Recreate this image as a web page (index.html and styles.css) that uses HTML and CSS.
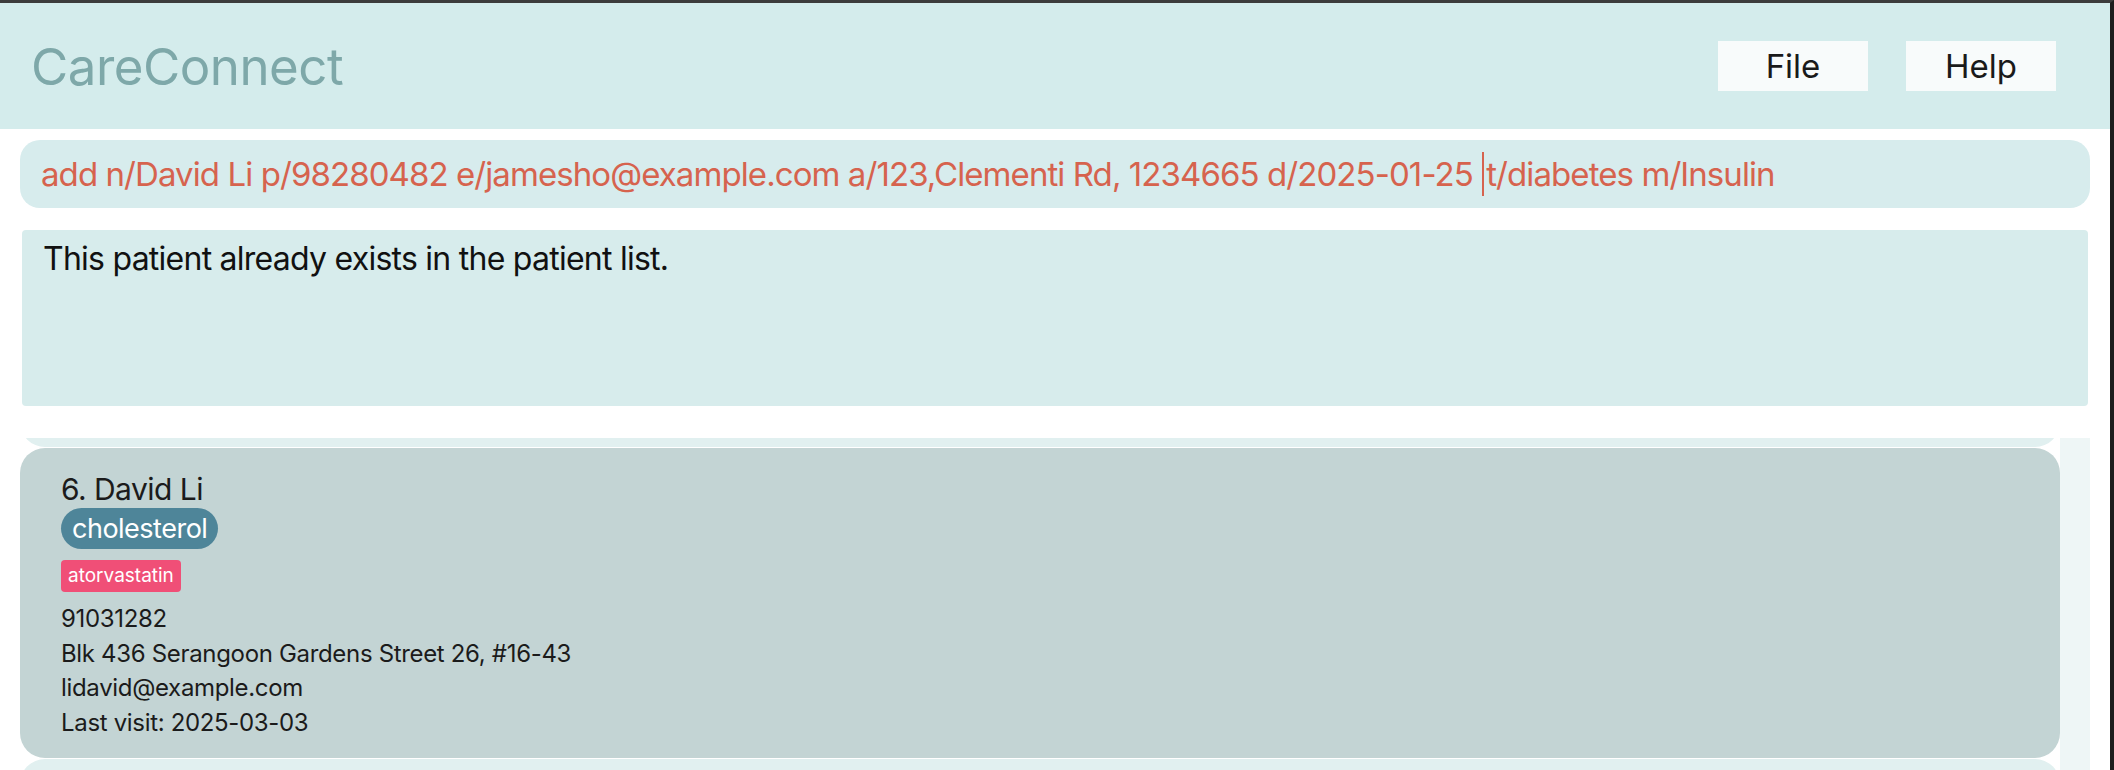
FILE: index.html
```html
<!DOCTYPE html>
<html lang="en">
<head>
<meta charset="utf-8">
<title>CareConnect</title>
<link rel="stylesheet" href="styles.css">
</head>
<body>
<div class="window">
  <header class="menubar">
    <div class="app-title">CareConnect</div>
    <nav class="menu">
      <button class="menu-btn">File</button>
      <button class="menu-btn">Help</button>
    </nav>
  </header>
  <main class="content">
    <div class="command-box">
      <span class="cmd-text">add n/David Li p/98280482 e/jamesho@example.com a/123,Clementi Rd, 1234665 d/2025-01-25&nbsp;</span><span class="caret"></span><span class="cmd-text">t/diabetes m/Insulin</span>
    </div>
    <div class="result-box">This patient already exists in the patient list.</div>
    <section class="list">
      <div class="list-scroll">
        <div class="card-peek"></div>
        <article class="card card-selected">
          <div class="card-name">6. David Li</div>
          <span class="condition">cholesterol</span>
          <span class="medication">atorvastatin</span>
          <div class="details">
            <div>91031282</div>
            <div>Blk 436 Serangoon Gardens Street 26, #16-43</div>
            <div>lidavid@example.com</div>
            <div>Last visit: 2025-03-03</div>
          </div>
        </article>
        <div class="card-next"></div>
      </div>
      <div class="scrollbar"></div>
    </section>
  </main>
</div>
</body>
</html>
```
FILE: styles.css
```css
html, body {
  margin: 0;
  padding: 0;
}
body {
  width: 2114px;
  height: 770px;
  overflow: hidden;
  background: #ffffff;
  font-family: "Inter", "Liberation Sans", sans-serif;
}
.window {
  box-sizing: border-box;
  height: 770px;
  border-top: 3px solid #3c3c3c;
  border-right: 4px solid #1d1d1d;
  display: flex;
  flex-direction: column;
  background: #ffffff;
}
.menubar {
  height: 126px;
  flex-shrink: 0;
  display: flex;
  align-items: center;
  justify-content: space-between;
  padding: 0 54px 0 31px;
  background: #d4ecec;
}
.app-title {
  font-size: 51px;
  line-height: 1;
  color: #7ea8a9;
  letter-spacing: -0.5px;
}
.menu {
  display: flex;
  gap: 38px;
}
.menu-btn {
  width: 150px;
  height: 50px;
  padding: 0;
  border: none;
  background: #f8fbfb;
  color: #1a1a1a;
  font-family: "Inter", "Liberation Sans", sans-serif;
  font-size: 33px;
  line-height: 1;
}
.content {
  flex: 1;
  display: flex;
  flex-direction: column;
  min-height: 0;
}
.command-box {
  margin: 11px 20px 0 20px;
  height: 68px;
  border-radius: 20px;
  background: #d7eced;
  display: flex;
  align-items: center;
  padding-left: 21px;
  color: #d6634e;
  font-size: 33px;
  letter-spacing: -0.92px;
  white-space: pre;
}
.caret {
  width: 2px;
  height: 44px;
  background: #d6634e;
  margin: 0 2px 0 1px;
}
.result-box {
  margin: 22px 22px 0 22px;
  height: 176px;
  box-sizing: border-box;
  padding: 9px 21px;
  border-radius: 4px;
  background: #d7ecec;
  color: #111111;
  font-size: 32px;
  letter-spacing: -0.75px;
}
.list {
  margin: 32px 20px 0 20px;
  flex: 1;
  min-height: 0;
  display: flex;
}
.list-scroll {
  flex: 1;
  display: flex;
  flex-direction: column;
  gap: 1px;
  overflow: hidden;
}
.scrollbar {
  width: 30px;
  background: #eef6f6;
}
.card-peek {
  height: 9px;
  flex-shrink: 0;
  overflow: hidden;
  display: flex;
  flex-direction: column;
  justify-content: flex-end;
}
.card-peek::before,
.card-next::before {
  content: "";
  flex-shrink: 0;
  height: 60px;
  border-radius: 25px;
  background: #e1f0f0;
}
.card-next {
  height: 30px;
  flex-shrink: 0;
  overflow: hidden;
  display: flex;
  flex-direction: column;
}
.card {
  flex-shrink: 0;
  box-sizing: border-box;
  height: 310px;
  border-radius: 25px;
  padding: 23px 41px 21px 41px;
  display: flex;
  flex-direction: column;
  align-items: flex-start;
  color: #1b1b1b;
}
.card-selected {
  background: #c3d4d4;
}
.card-name {
  font-size: 30px;
  line-height: 36px;
  letter-spacing: -0.55px;
  margin-bottom: 1px;
}
.condition {
  height: 41px;
  line-height: 41px;
  padding: 0 11px;
  border-radius: 21px;
  background: #4e8599;
  color: #ffffff;
  font-size: 27px;
  letter-spacing: -0.5px;
}
.medication {
  margin-top: 11px;
  height: 32px;
  line-height: 32px;
  padding: 0 7px;
  border-radius: 4px;
  background: #f04f77;
  color: #ffffff;
  font-size: 19px;
}
.details {
  margin-top: 10px;
  font-size: 24px;
  line-height: 34.5px;
  letter-spacing: -0.33px;
}
```
